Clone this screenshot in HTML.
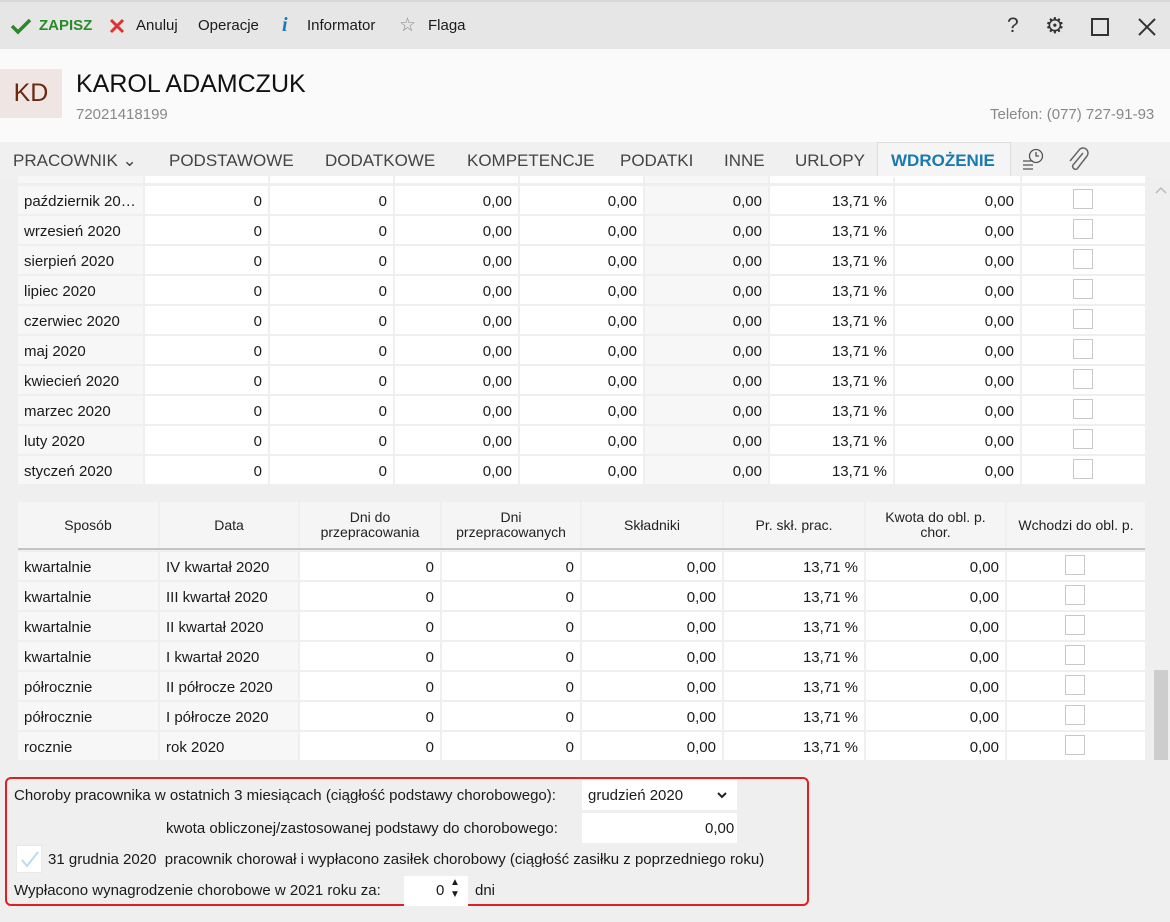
<!DOCTYPE html>
<html><head><meta charset="utf-8"><style>
*{margin:0;padding:0;box-sizing:border-box}
body{width:1170px;height:922px;overflow:hidden;background:#efefef;font-family:"Liberation Sans",sans-serif;font-size:15px;color:#1a1a1a;position:relative}
.a{position:absolute}
.tb{left:0;top:0;width:1170px;height:49px;background:#e6e6e6;border-top:2px solid #d8d8d8}
.hd{left:0;top:49px;width:1170px;height:93px;background:#fafafa}
.tabs{left:0;top:142px;width:1170px;height:36px;background:#f0f0f0}
.tab{position:absolute;top:9px;font-size:17px;color:#444}
.c{position:absolute;height:28px;background:#fff;line-height:31px;padding:0 6px;text-align:right;white-space:nowrap;overflow:hidden}
.g{background:#f7f7f7}
.l{text-align:left}
.cb{position:absolute;width:20px;height:20px;border:1px solid #c8c8c8;background:#fff}
.h{position:absolute;top:502px;height:46px;background:#f5f5f5;text-align:center;font-size:14px;line-height:15px;display:flex;align-items:center;justify-content:center;color:#222}
.in{position:absolute;background:#fff}
</style></head><body>
<div class="a tb">
<svg class="a" style="left:10px;top:15px" width="22" height="18" viewBox="0 0 22 18"><path d="M2 9l6 6L20 3" stroke="#2a8a2a" stroke-width="3.5" fill="none"/></svg>
<div class="a" style="left:39px;top:15px;color:#2a8a2a;font-weight:bold">ZAPISZ</div>
<svg class="a" style="left:109px;top:16px" width="16" height="16"><path d="M2 2l12 12M14 2L2 14" stroke="#e03030" stroke-width="3"/></svg>
<div class="a" style="left:136px;top:15px">Anuluj</div>
<div class="a" style="left:198px;top:15px">Operacje</div>
<div class="a" style="left:282px;top:12px;color:#1a7ab8;font:italic bold 20px 'Liberation Serif',serif">i</div>
<div class="a" style="left:307px;top:15px">Informator</div>
<div class="a" style="left:399px;top:12px;color:#888;font-size:19px">☆</div>
<div class="a" style="left:428px;top:15px">Flaga</div>
<div class="a" style="left:1007px;top:12px;font-size:21px;color:#333">?</div>
<div class="a" style="left:1045px;top:11px;font-size:22px;color:#333">⚙</div>
<div class="a" style="left:1091px;top:16px;width:18px;height:18px;border:2px solid #333"></div>
<svg class="a" style="left:1138px;top:16px" width="18" height="18"><path d="M1 1l16 16M17 1L1 17" stroke="#333" stroke-width="2"/></svg>
</div>
<div class="a hd">
<div class="a" style="left:0;top:20px;width:62px;height:49px;background:#efe6e3;color:#6a2a10;font-size:25px;line-height:49px;text-align:center">KD</div>
<div class="a" style="left:76px;top:21px;font-size:25px;color:#111">KAROL ADAMCZUK</div>
<div class="a" style="left:76px;top:57px;color:#888">72021418199</div>
<div class="a" style="left:990px;top:57px;color:#888">Telefon: (077) 727-91-93</div>
</div>
<div class="a tabs">
<div class="tab" style="left:13px">PRACOWNIK ⌄</div>
<div class="tab" style="left:169px">PODSTAWOWE</div>
<div class="tab" style="left:325px">DODATKOWE</div>
<div class="tab" style="left:467px">KOMPETENCJE</div>
<div class="tab" style="left:620px">PODATKI</div>
<div class="tab" style="left:724px">INNE</div>
<div class="tab" style="left:795px">URLOPY</div>
<div class="a" style="left:877px;top:0;width:134px;height:36px;background:#f5f5f5;border:1px solid #ddd;border-bottom:none"></div>
<div class="tab" style="left:891px;color:#1a7ab0;font-weight:bold">WDROŻENIE</div>
<svg class="a" style="left:1021px;top:5px" width="26" height="26"><circle cx="15" cy="9" r="6.5" stroke="#555" fill="none" stroke-width="1.3"/><path d="M15 5v4h3M2 14h10M2 18h10M2 22h10" stroke="#555" stroke-width="1.3" fill="none"/></svg>
<svg class="a" style="left:1066px;top:5px" width="24" height="26"><path d="M17 6L7 18a3 3 0 0 0 4 4L21 9a5 5 0 0 0-7-7L4 14" stroke="#666" stroke-width="1.5" fill="none"/></svg>
</div>
<div class="a" style="left:1150px;top:178px;width:20px;height:590px;background:#efefef"></div>
<svg class="a" style="left:1155px;top:186px" width="12" height="8"><path d="M1 7l5-5 5 5" stroke="#bbb" stroke-width="1.5" fill="none"/></svg>
<div class="a" style="left:1154px;top:670px;width:14px;height:90px;background:#cdcdcd"></div>
<div class="c g" style="left:18px;top:176px;width:125px;height:7px"></div><div class="c" style="left:145px;top:176px;width:123px;height:7px"></div><div class="c" style="left:270px;top:176px;width:123px;height:7px"></div><div class="c" style="left:395px;top:176px;width:123px;height:7px"></div><div class="c" style="left:520px;top:176px;width:123px;height:7px"></div><div class="c g" style="left:645px;top:176px;width:123px;height:7px"></div><div class="c" style="left:770px;top:176px;width:123px;height:7px"></div><div class="c" style="left:895px;top:176px;width:125px;height:7px"></div><div class="c" style="left:1022px;top:176px;width:123px;height:7px"></div>

<div class="c g l" style="left:18px;top:186px;width:125px">październik 20…</div><div class="c" style="left:145px;top:186px;width:123px">0</div><div class="c" style="left:270px;top:186px;width:123px">0</div><div class="c" style="left:395px;top:186px;width:123px">0,00</div><div class="c" style="left:520px;top:186px;width:123px">0,00</div><div class="c g" style="left:645px;top:186px;width:123px">0,00</div><div class="c" style="left:770px;top:186px;width:123px">13,71 %</div><div class="c" style="left:895px;top:186px;width:125px">0,00</div><div class="c" style="left:1022px;top:186px;width:123px"></div><div class="cb" style="left:1073px;top:189px"></div>
<div class="c g l" style="left:18px;top:216px;width:125px">wrzesień 2020</div><div class="c" style="left:145px;top:216px;width:123px">0</div><div class="c" style="left:270px;top:216px;width:123px">0</div><div class="c" style="left:395px;top:216px;width:123px">0,00</div><div class="c" style="left:520px;top:216px;width:123px">0,00</div><div class="c g" style="left:645px;top:216px;width:123px">0,00</div><div class="c" style="left:770px;top:216px;width:123px">13,71 %</div><div class="c" style="left:895px;top:216px;width:125px">0,00</div><div class="c" style="left:1022px;top:216px;width:123px"></div><div class="cb" style="left:1073px;top:219px"></div>
<div class="c g l" style="left:18px;top:246px;width:125px">sierpień 2020</div><div class="c" style="left:145px;top:246px;width:123px">0</div><div class="c" style="left:270px;top:246px;width:123px">0</div><div class="c" style="left:395px;top:246px;width:123px">0,00</div><div class="c" style="left:520px;top:246px;width:123px">0,00</div><div class="c g" style="left:645px;top:246px;width:123px">0,00</div><div class="c" style="left:770px;top:246px;width:123px">13,71 %</div><div class="c" style="left:895px;top:246px;width:125px">0,00</div><div class="c" style="left:1022px;top:246px;width:123px"></div><div class="cb" style="left:1073px;top:249px"></div>
<div class="c g l" style="left:18px;top:276px;width:125px">lipiec 2020</div><div class="c" style="left:145px;top:276px;width:123px">0</div><div class="c" style="left:270px;top:276px;width:123px">0</div><div class="c" style="left:395px;top:276px;width:123px">0,00</div><div class="c" style="left:520px;top:276px;width:123px">0,00</div><div class="c g" style="left:645px;top:276px;width:123px">0,00</div><div class="c" style="left:770px;top:276px;width:123px">13,71 %</div><div class="c" style="left:895px;top:276px;width:125px">0,00</div><div class="c" style="left:1022px;top:276px;width:123px"></div><div class="cb" style="left:1073px;top:279px"></div>
<div class="c g l" style="left:18px;top:306px;width:125px">czerwiec 2020</div><div class="c" style="left:145px;top:306px;width:123px">0</div><div class="c" style="left:270px;top:306px;width:123px">0</div><div class="c" style="left:395px;top:306px;width:123px">0,00</div><div class="c" style="left:520px;top:306px;width:123px">0,00</div><div class="c g" style="left:645px;top:306px;width:123px">0,00</div><div class="c" style="left:770px;top:306px;width:123px">13,71 %</div><div class="c" style="left:895px;top:306px;width:125px">0,00</div><div class="c" style="left:1022px;top:306px;width:123px"></div><div class="cb" style="left:1073px;top:309px"></div>
<div class="c g l" style="left:18px;top:336px;width:125px">maj 2020</div><div class="c" style="left:145px;top:336px;width:123px">0</div><div class="c" style="left:270px;top:336px;width:123px">0</div><div class="c" style="left:395px;top:336px;width:123px">0,00</div><div class="c" style="left:520px;top:336px;width:123px">0,00</div><div class="c g" style="left:645px;top:336px;width:123px">0,00</div><div class="c" style="left:770px;top:336px;width:123px">13,71 %</div><div class="c" style="left:895px;top:336px;width:125px">0,00</div><div class="c" style="left:1022px;top:336px;width:123px"></div><div class="cb" style="left:1073px;top:339px"></div>
<div class="c g l" style="left:18px;top:366px;width:125px">kwiecień 2020</div><div class="c" style="left:145px;top:366px;width:123px">0</div><div class="c" style="left:270px;top:366px;width:123px">0</div><div class="c" style="left:395px;top:366px;width:123px">0,00</div><div class="c" style="left:520px;top:366px;width:123px">0,00</div><div class="c g" style="left:645px;top:366px;width:123px">0,00</div><div class="c" style="left:770px;top:366px;width:123px">13,71 %</div><div class="c" style="left:895px;top:366px;width:125px">0,00</div><div class="c" style="left:1022px;top:366px;width:123px"></div><div class="cb" style="left:1073px;top:369px"></div>
<div class="c g l" style="left:18px;top:396px;width:125px">marzec 2020</div><div class="c" style="left:145px;top:396px;width:123px">0</div><div class="c" style="left:270px;top:396px;width:123px">0</div><div class="c" style="left:395px;top:396px;width:123px">0,00</div><div class="c" style="left:520px;top:396px;width:123px">0,00</div><div class="c g" style="left:645px;top:396px;width:123px">0,00</div><div class="c" style="left:770px;top:396px;width:123px">13,71 %</div><div class="c" style="left:895px;top:396px;width:125px">0,00</div><div class="c" style="left:1022px;top:396px;width:123px"></div><div class="cb" style="left:1073px;top:399px"></div>
<div class="c g l" style="left:18px;top:426px;width:125px">luty 2020</div><div class="c" style="left:145px;top:426px;width:123px">0</div><div class="c" style="left:270px;top:426px;width:123px">0</div><div class="c" style="left:395px;top:426px;width:123px">0,00</div><div class="c" style="left:520px;top:426px;width:123px">0,00</div><div class="c g" style="left:645px;top:426px;width:123px">0,00</div><div class="c" style="left:770px;top:426px;width:123px">13,71 %</div><div class="c" style="left:895px;top:426px;width:125px">0,00</div><div class="c" style="left:1022px;top:426px;width:123px"></div><div class="cb" style="left:1073px;top:429px"></div>
<div class="c g l" style="left:18px;top:456px;width:125px">styczeń 2020</div><div class="c" style="left:145px;top:456px;width:123px">0</div><div class="c" style="left:270px;top:456px;width:123px">0</div><div class="c" style="left:395px;top:456px;width:123px">0,00</div><div class="c" style="left:520px;top:456px;width:123px">0,00</div><div class="c g" style="left:645px;top:456px;width:123px">0,00</div><div class="c" style="left:770px;top:456px;width:123px">13,71 %</div><div class="c" style="left:895px;top:456px;width:125px">0,00</div><div class="c" style="left:1022px;top:456px;width:123px"></div><div class="cb" style="left:1073px;top:459px"></div>

<div class="h" style="left:18px;width:140px">Sposób</div>
<div class="h" style="left:160px;width:138px">Data</div>
<div class="h" style="left:300px;width:140px">Dni do<br>przepracowania</div>
<div class="h" style="left:442px;width:138px">Dni<br>przepracowanych</div>
<div class="h" style="left:582px;width:140px">Składniki</div>
<div class="h" style="left:724px;width:140px">Pr. skł. prac.</div>
<div class="h" style="left:866px;width:139px">Kwota do obl. p.<br>chor.</div>
<div class="h" style="left:1007px;width:138px">Wchodzi do obl. p.</div>
<div class="a" style="left:18px;top:548px;width:1127px;height:2px;background:#c4c4c4"></div>

<div class="c g l" style="left:18px;top:552px;width:140px">kwartalnie</div><div class="c g l" style="left:160px;top:552px;width:138px">IV kwartał 2020</div><div class="c" style="left:300px;top:552px;width:140px">0</div><div class="c" style="left:442px;top:552px;width:138px">0</div><div class="c" style="left:582px;top:552px;width:140px">0,00</div><div class="c" style="left:724px;top:552px;width:140px">13,71 %</div><div class="c" style="left:866px;top:552px;width:139px">0,00</div><div class="c" style="left:1007px;top:552px;width:138px"></div><div class="cb" style="left:1065px;top:555px"></div>
<div class="c g l" style="left:18px;top:582px;width:140px">kwartalnie</div><div class="c g l" style="left:160px;top:582px;width:138px">III kwartał 2020</div><div class="c" style="left:300px;top:582px;width:140px">0</div><div class="c" style="left:442px;top:582px;width:138px">0</div><div class="c" style="left:582px;top:582px;width:140px">0,00</div><div class="c" style="left:724px;top:582px;width:140px">13,71 %</div><div class="c" style="left:866px;top:582px;width:139px">0,00</div><div class="c" style="left:1007px;top:582px;width:138px"></div><div class="cb" style="left:1065px;top:585px"></div>
<div class="c g l" style="left:18px;top:612px;width:140px">kwartalnie</div><div class="c g l" style="left:160px;top:612px;width:138px">II kwartał 2020</div><div class="c" style="left:300px;top:612px;width:140px">0</div><div class="c" style="left:442px;top:612px;width:138px">0</div><div class="c" style="left:582px;top:612px;width:140px">0,00</div><div class="c" style="left:724px;top:612px;width:140px">13,71 %</div><div class="c" style="left:866px;top:612px;width:139px">0,00</div><div class="c" style="left:1007px;top:612px;width:138px"></div><div class="cb" style="left:1065px;top:615px"></div>
<div class="c g l" style="left:18px;top:642px;width:140px">kwartalnie</div><div class="c g l" style="left:160px;top:642px;width:138px">I kwartał 2020</div><div class="c" style="left:300px;top:642px;width:140px">0</div><div class="c" style="left:442px;top:642px;width:138px">0</div><div class="c" style="left:582px;top:642px;width:140px">0,00</div><div class="c" style="left:724px;top:642px;width:140px">13,71 %</div><div class="c" style="left:866px;top:642px;width:139px">0,00</div><div class="c" style="left:1007px;top:642px;width:138px"></div><div class="cb" style="left:1065px;top:645px"></div>
<div class="c g l" style="left:18px;top:672px;width:140px">półrocznie</div><div class="c g l" style="left:160px;top:672px;width:138px">II półrocze 2020</div><div class="c" style="left:300px;top:672px;width:140px">0</div><div class="c" style="left:442px;top:672px;width:138px">0</div><div class="c" style="left:582px;top:672px;width:140px">0,00</div><div class="c" style="left:724px;top:672px;width:140px">13,71 %</div><div class="c" style="left:866px;top:672px;width:139px">0,00</div><div class="c" style="left:1007px;top:672px;width:138px"></div><div class="cb" style="left:1065px;top:675px"></div>
<div class="c g l" style="left:18px;top:702px;width:140px">półrocznie</div><div class="c g l" style="left:160px;top:702px;width:138px">I półrocze 2020</div><div class="c" style="left:300px;top:702px;width:140px">0</div><div class="c" style="left:442px;top:702px;width:138px">0</div><div class="c" style="left:582px;top:702px;width:140px">0,00</div><div class="c" style="left:724px;top:702px;width:140px">13,71 %</div><div class="c" style="left:866px;top:702px;width:139px">0,00</div><div class="c" style="left:1007px;top:702px;width:138px"></div><div class="cb" style="left:1065px;top:705px"></div>
<div class="c g l" style="left:18px;top:732px;width:140px">rocznie</div><div class="c g l" style="left:160px;top:732px;width:138px">rok 2020</div><div class="c" style="left:300px;top:732px;width:140px">0</div><div class="c" style="left:442px;top:732px;width:138px">0</div><div class="c" style="left:582px;top:732px;width:140px">0,00</div><div class="c" style="left:724px;top:732px;width:140px">13,71 %</div><div class="c" style="left:866px;top:732px;width:139px">0,00</div><div class="c" style="left:1007px;top:732px;width:138px"></div><div class="cb" style="left:1065px;top:735px"></div>

<div class="a" style="left:5px;top:777px;width:804px;height:129px;border:2px solid #e02020;border-radius:6px"></div>
<div class="a" style="left:14px;top:787px">Choroby pracownika w ostatnich 3 miesiącach (ciągłość podstawy chorobowego):</div>
<div class="in" style="left:582px;top:780px;width:155px;height:30px"></div>
<div class="a" style="left:588px;top:787px">grudzień 2020</div>
<svg class="a" style="left:717px;top:792px" width="10" height="8"><path d="M1 1l4 4 4-4" stroke="#222" stroke-width="2" fill="none"/></svg>
<div class="a" style="left:166px;top:820px">kwota obliczonej/zastosowanej podstawy do chorobowego:</div>
<div class="in" style="left:582px;top:813px;width:155px;height:30px"></div>
<div class="a" style="left:705px;top:820px">0,00</div>
<div class="in" style="left:16px;top:845px;width:26px;height:28px;border:1px solid #e8e8e8"></div>
<svg class="a" style="left:19px;top:849px" width="22" height="20"><path d="M3 11l5 6L19 3" stroke="#bcdcec" stroke-width="2" fill="none"/></svg>
<div class="a" style="left:48px;top:851px">31 grudnia 2020&nbsp; pracownik chorował i wypłacono zasiłek chorobowy (ciągłość zasiłku z poprzedniego roku)</div>
<div class="a" style="left:14px;top:882px">Wypłacono wynagrodzenie chorobowe w 2021 roku za:</div>
<div class="in" style="left:404px;top:876px;width:64px;height:30px"></div>
<div class="a" style="left:436px;top:882px">0</div>
<div class="a" style="left:450px;top:877px;font-size:10px;line-height:12px">▲<br>▼</div>
<div class="a" style="left:475px;top:882px">dni</div>
</body></html>
